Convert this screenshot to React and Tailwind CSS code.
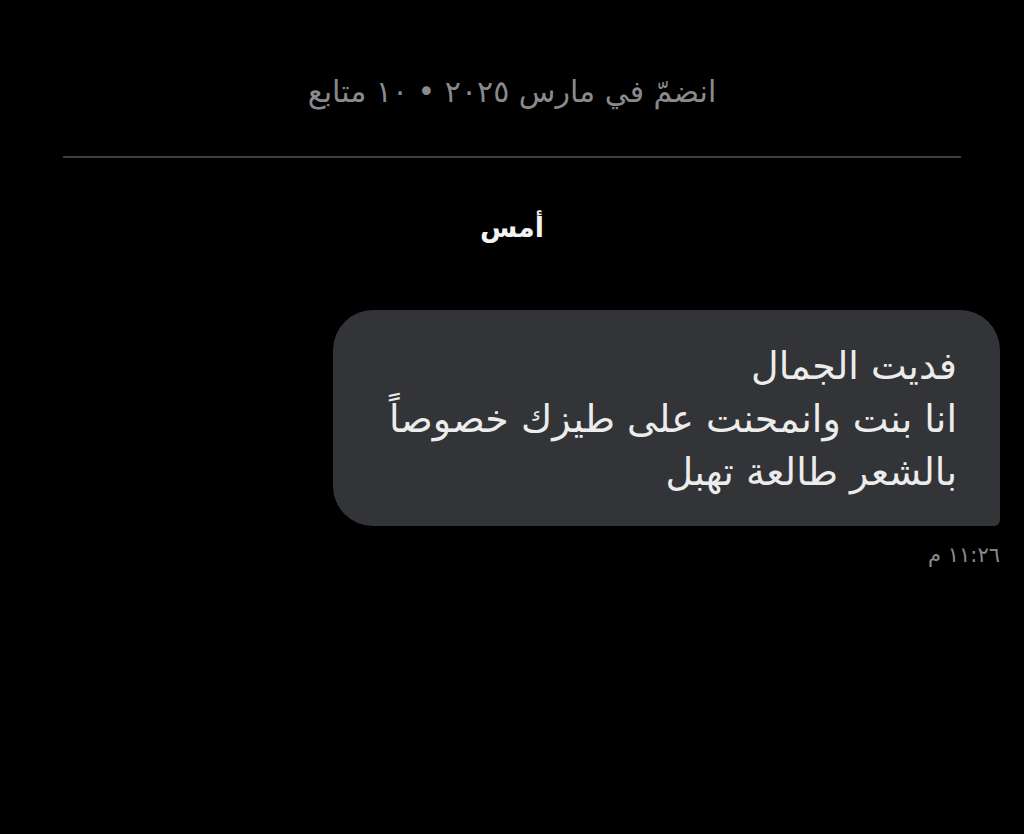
export default function App() {
  const lines = ['فديت الجمال', 'انا بنت وانمحنت على طيزك خصوصاً', 'بالشعر طالعة تهبل'];

  return (
    <div dir="rtl" className="h-[834px] w-full bg-black font-['DejaVu_Sans',sans-serif] overflow-hidden">
      {/* profile info */}
      <div className="pt-[70px] text-center text-[30px] leading-[44px] text-[#8a8a8d]">
        انضمّ في مارس ٢٠٢٥ • ١٠ متابع
      </div>
      <div className="mx-[63px] mt-[42px] h-[2px] bg-[#3f3f42]" />

      {/* day separator */}
      <div className="mt-[52px] text-center text-[27px] font-bold leading-[36px] text-[#f2f2f2]">أمس</div>

      {/* message */}
      <div className="mt-[64px] flex flex-col items-start pr-[24px]">
        <div className="w-[667px] rounded-[40px] rounded-br-[6px] bg-[#323437] pt-[30px] pb-[27px] pr-[43px] text-[38px] leading-[53px] text-[#ececec]">
          {lines.map((l) => (
            <div key={l}>{l}</div>
          ))}
        </div>
        <div className="mt-[17px] text-[21px] leading-[24px] text-[#8a8a8d]">١١:٢٦ م</div>
      </div>
    </div>
  );
}
